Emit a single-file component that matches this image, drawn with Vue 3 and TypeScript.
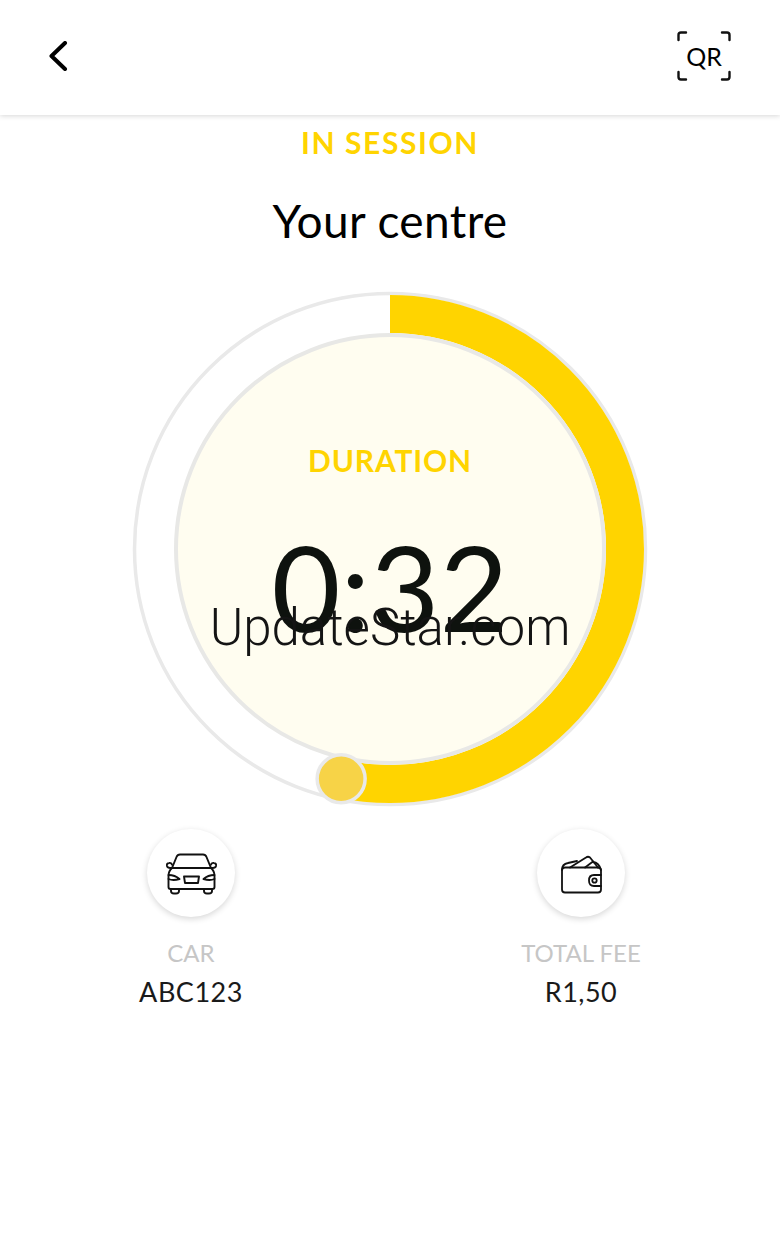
<script setup lang="ts">
interface Stat {
  label: string;
  value: string;
  icon: 'car' | 'wallet';
}

const stats: Stat[] = [
  { label: 'CAR', value: 'ABC123', icon: 'car' },
  { label: 'TOTAL FEE', value: 'R1,50', icon: 'wallet' },
];

const cx = 260;
const cy = 260;
const trackRadius = 235;
const progress = 192 / 360;
const circumference = 2 * Math.PI * trackRadius;
const dash = `${circumference * progress} ${circumference}`;

const knobAngle = progress * 2 * Math.PI;
const knobX = cx + trackRadius * Math.sin(knobAngle);
const knobY = cy - trackRadius * Math.cos(knobAngle);
</script>

<template>
  <div class="screen">
    <header class="topbar">
      <svg class="back" width="20" height="30" viewBox="0 0 20 30" fill="none">
        <path d="M17 2 L3.5 15 L17 28" stroke="#000" stroke-width="4" stroke-linecap="round" stroke-linejoin="round" />
      </svg>
      <div class="qr">
        <svg class="qr-frame" width="54" height="50" viewBox="0 0 54 50" fill="none">
          <path
            d="M1.5 9 V4 Q1.5 1.5 4 1.5 H9 M45 1.5 H50 Q52.500 1.500 52.500 4 V9 M1.500 41 V46 Q1.500 48.500 4 48.500 H9 M45 48.500 H50 Q52.500 48.500 52.500 46 V41"
            stroke="#111"
            stroke-width="2.400"
            stroke-linecap="round"
          />
        </svg>
        <span class="qr-text">QR</span>
      </div>
    </header>

    <main class="content">
      <p class="status">IN SESSION</p>
      <h1 class="title">Your centre</h1>

      <div class="gauge">
        <svg class="gauge-svg" width="520" height="520" viewBox="0 0 520 520" fill="none">
          <circle :cx="cx" :cy="cy" r="255.500" fill="#fff" stroke="#e9e9e9" stroke-width="3.500" />
          <circle
            :cx="cx"
            :cy="cy"
            :r="trackRadius"
            stroke="#ffd400"
            stroke-width="38"
            :stroke-dasharray="dash"
            :transform="`rotate(-90 ${cx} ${cy})`"
          />
          <circle :cx="cx" :cy="cy" r="214" fill="#fffdf0" stroke="#e8e8e6" stroke-width="4" />
          <circle :cx="knobX" :cy="knobY" r="24" fill="#f7d347" stroke="#e9e9e9" stroke-width="3.500" />
        </svg>
        <div class="gauge-center">
          <p class="duration-label">DURATION</p>
          <p class="duration-value">0:32</p>
        </div>
        <span class="watermark">UpdateStar.com</span>
      </div>

      <section class="stats">
        <div v-for="stat in stats" :key="stat.label" class="stat">
          <div class="stat-icon">
            <svg v-if="stat.icon === 'car'" width="53" height="42" viewBox="0 0 53 42" fill="none" stroke="#111" stroke-width="1.900" stroke-linecap="round" stroke-linejoin="round">
              <path d="M7 15 L11.500 4 Q12.500 1.500 15 1.500 H38 Q40.500 1.500 41.500 4 L46 15" />
              <path d="M7 15 H46" />
              <path d="M7 11.500 Q6 9.500 4 10 Q1.500 10.500 2 13 Q2.500 15 5.500 15 H7" />
              <path d="M46 11.500 Q47 9.500 49 10 Q51.500 10.500 51 13 Q50.500 15 47.500 15 H46" />
              <path d="M7 15 Q3.500 18 3.500 23 V34 Q3.500 36 5.500 36 H47.500 Q49.500 36 49.500 34 V23 Q49.500 18 46 15" />
              <path d="M3.500 22 Q10 22 14.500 26 Q8 28 3.500 26" />
              <path d="M49.500 22 Q43 22 38.500 26 Q45 28 49.500 26" />
              <path d="M19 23.500 H34 L33 30 H20 Z" />
              <path d="M6 36 V38 Q6 40.500 9 40.500 H11 Q14 40.500 14 38 V36" />
              <path d="M39 36 V38 Q39 40.500 42 40.500 H44 Q47 40.500 47 38 V36" />
            </svg>
            <svg v-else width="41" height="39" viewBox="0 0 41 39" fill="none" stroke="#111" stroke-width="1.800" stroke-linecap="round" stroke-linejoin="round">
              <path d="M37 12.500 H4 Q1 12.500 1 15.500 V34.500 Q1 37.500 4 37.500 H37 Q40 37.500 40 34.500 V31" />
              <path d="M40 20 V15.500 Q40 12.500 37 12.500" />
              <path d="M1 15 Q1 9 7 8 L16 6" />
              <path d="M9 12.500 L25 2.500 Q27 1 29 2.500 L37 12.500" />
              <path d="M24 12.500 L32 6.500" />
              <path d="M32 7 Q38 7.500 40 15" />
              <path d="M40 20 H33 Q28 20 28 25.500 Q28 31 33 31 H40 Z" />
              <circle cx="33.500" cy="25.500" r="2.200" />
            </svg>
          </div>
          <span class="stat-label">{{ stat.label }}</span>
          <span class="stat-value">{{ stat.value }}</span>
        </div>
      </section>
    </main>
  </div>
</template>

<style scoped>
.screen {
  width: 780px;
  height: 1244px;
  background: #fff;
  overflow: hidden;
  font-family: Lato, "Open Sans", sans-serif;
}

.topbar {
  height: 115px;
  box-sizing: border-box;
  padding: 31px 49px 0 48px;
  display: flex;
  justify-content: space-between;
  align-items: flex-start;
  background: #fff;
  box-shadow: 0 1px 5px rgba(0, 0, 0, 0.16);
  position: relative;
}

.back {
  margin-top: 10px;
}

.qr {
  width: 54px;
  height: 50px;
  position: relative;
  display: flex;
  align-items: center;
  justify-content: center;
}

.qr-frame {
  position: absolute;
  left: 0;
  top: 0;
}

.qr-text {
  font-size: 25px;
  font-weight: 400;
  color: #000;
}

.content {
  display: flex;
  flex-direction: column;
  align-items: center;
}

.status {
  margin: 9px 0 0;
  font-size: 30px;
  line-height: 36px;
  font-weight: 700;
  color: #ffd400;
  letter-spacing: 1.6px;
}

.title {
  margin: 33px 0 0;
  font-size: 46px;
  line-height: 56px;
  font-weight: 400;
  color: #000;
  letter-spacing: 0.4px;
}

.gauge {
  margin-top: 40px;
  width: 520px;
  height: 520px;
  position: relative;
}

.gauge-svg {
  display: block;
}

.gauge-center {
  position: absolute;
  inset: 0;
  display: flex;
  flex-direction: column;
  align-items: center;
}

.duration-label {
  margin: 151px 0 0;
  font-size: 30px;
  line-height: 40px;
  font-weight: 700;
  color: #ffd400;
  letter-spacing: 0.8px;
}

.duration-value {
  margin: 41px 0 0;
  font-size: 119px;
  line-height: 130px;
  color: #0e120e;
}

.watermark {
  position: absolute;
  left: 0;
  right: 0;
  top: 309px;
  text-align: center;
  font-family: Roboto, sans-serif;
  font-weight: 300;
  font-size: 51px;
  line-height: 60px;
  color: #141414;
}

.stats {
  margin-top: 20px;
  padding-right: 8px;
  display: flex;
  justify-content: center;
  gap: 190px;
}

.stat {
  width: 200px;
  display: flex;
  flex-direction: column;
  align-items: center;
}

.stat-icon {
  width: 88px;
  height: 88px;
  border-radius: 50%;
  background: #fff;
  box-shadow: 0 2px 6px rgba(0, 0, 0, 0.16);
  display: flex;
  align-items: center;
  justify-content: center;
}

.stat-icon svg {
  margin-top: 2px;
}

.stat-label {
  margin-top: 21px;
  font-size: 24px;
  line-height: 30px;
  color: #c6c6c6;
}

.stat-value {
  margin-top: 7px;
  font-size: 27px;
  line-height: 34px;
  color: #1a1a1a;
  letter-spacing: 0.5px;
}
</style>
